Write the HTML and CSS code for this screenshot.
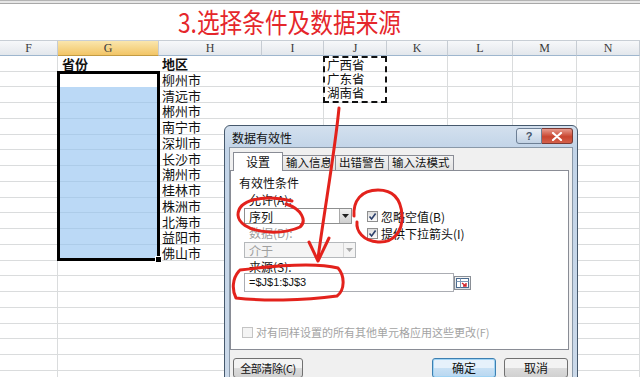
FILE: index.html
```html
<!DOCTYPE html>
<html lang="zh-CN">
<head>
    <meta charset="UTF-8">
    <meta name="viewport" content="width=device-width, initial-scale=1.0">
    <title>选择条件及数据来源</title>
    <link rel="stylesheet" href="styles.css">
</head>
<body>
    <div class="page">
        <div class="topbar"></div>
        <div class="title-band"><h1>3.选择条件及数据来源</h1></div>

        <div class="col-heads">
            <div>F</div>
            <div class="sel">G</div>
            <div>H</div>
            <div>I</div>
            <div>J</div>
            <div>K</div>
            <div>L</div>
            <div>M</div>
            <div>N</div>
        </div>

        <div class="sheet">
            <div class="gridcol"></div>
            <div class="gridcol"></div>
            <div class="gridcol"></div>
            <div class="gridcol"></div>
            <div class="gridcol"></div>
            <div class="gridcol"></div>
            <div class="gridcol"></div>
            <div class="gridcol"></div>
            <div class="gridcol"></div>

            <div class="head-g">省份</div>
            <div class="head-h">地区</div>
            <div class="selection"><span class="fill-handle"></span></div>
            <div class="cities">
                <div>柳州市</div>
                <div>清远市</div>
                <div>郴州市</div>
                <div>南宁市</div>
                <div>深圳市</div>
                <div>长沙市</div>
                <div>潮州市</div>
                <div>桂林市</div>
                <div>株洲市</div>
                <div>北海市</div>
                <div>益阳市</div>
                <div>佛山市</div>
            </div>
            <div class="provinces">
                <div>广西省</div>
                <div>广东省</div>
                <div>湖南省</div>
            </div>
        </div>

        <div class="dialog">
            <div class="dialog-title">
                <span>数据有效性</span>
                <div class="title-btns">
                    <div class="btn-help">?</div>
                    <div class="btn-close">
                        <svg width="12" height="9" viewBox="0 0 12 9"><path d="M2 1 L10 8 M10 1 L2 8" stroke="#fff" stroke-width="2.2" stroke-linecap="round"/></svg>
                    </div>
                </div>
            </div>
            <div class="client">
                <div class="tabs">
                    <div class="tab active">设置</div>
                    <div class="tab">输入信息</div>
                    <div class="tab">出错警告</div>
                    <div class="tab">输入法模式</div>
                </div>
                <div class="panel">
                    <div class="group-label">有效性条件</div>
                    <div class="cond">
                        <div class="cond-left">
                            <div class="field-label">允许(A):</div>
                            <div class="combo">
                                <span>序列</span>
                                <i class="arrow"><svg width="7" height="4" viewBox="0 0 7 4"><path d="M0 0 H7 L3.5 4 Z" fill="#222"/></svg></i>
                            </div>
                            <div class="field-label muted">数据(D):</div>
                            <div class="combo disabled">
                                <span>介于</span>
                                <i class="arrow"><svg width="7" height="4" viewBox="0 0 7 4"><path d="M0 0 H7 L3.5 4 Z" fill="#a8a8a8"/></svg></i>
                            </div>
                        </div>
                        <div class="checks">
                            <label class="check"><span class="box on"><svg width="9" height="9" viewBox="0 0 9 9"><path d="M1.5 4.5 L3.6 7 L7.6 1.5" stroke="#2b3f6b" stroke-width="1.6" fill="none"/></svg></span>忽略空值(B)</label>
                            <label class="check"><span class="box on"><svg width="9" height="9" viewBox="0 0 9 9"><path d="M1.5 4.5 L3.6 7 L7.6 1.5" stroke="#2b3f6b" stroke-width="1.6" fill="none"/></svg></span>提供下拉箭头(I)</label>
                        </div>
                    </div>
                    <div class="field-label source-label">来源(S):</div>
                    <div class="source">
                        <div class="source-input">=$J$1:$J$3</div>
                        <div class="refedit">
                            <svg width="13" height="10" viewBox="0 0 13 10">
                                <rect x="0.5" y="0.5" width="12" height="9" fill="#fff" stroke="#4a6a8e"/>
                                <path d="M0.5 3.5 H12.5 M4.5 0.5 V9.5" stroke="#7d98b6"/>
                                <path d="M6 5 L10 8 M10 5 L10 8 L7 8" stroke="#d2232a" stroke-width="1.4" fill="none"/>
                            </svg>
                        </div>
                    </div>
                    <label class="check apply-all"><span class="box off"></span>对有同样设置的所有其他单元格应用这些更改(F)</label>
                </div>
                <div class="btn-row">
                    <div class="btn clear">全部清除(C)</div>
                    <div class="btn default">确定</div>
                    <div class="btn cancel">取消</div>
                </div>
            </div>
        </div>

        <svg class="marks" width="640" height="377" viewBox="0 0 640 377">
            <g fill="none" stroke="#e3221c" stroke-width="3" stroke-linecap="round" stroke-linejoin="round">
                <path d="M339 108 C335 150, 326 200, 318 258"/>
                <path d="M309 242 L318 261 L329 238"/>
                <path d="M292 201 C262 194, 238 200, 238 215 C239 232, 278 237, 300 227 C307 221, 302 209, 286 204"/>
                <path d="M354 216 C353 201, 361 190, 378 190 C395 190, 401 201, 402 215 C403 232, 393 243, 378 242 C363 241, 356 231, 357 222"/>
                <path d="M240 270 C280 265, 318 263, 338 268 C345 276, 345 290, 337 296 C302 301, 262 301, 236 298 C232 290, 232 279, 239 271"/>
            </g>
        </svg>
    </div>
</body>
</html>
```

FILE: styles.css
```css
body {
    margin: 0;
    font-family: "Noto Sans CJK SC", sans-serif;
    background-color: #fff;
}
.page {
    position: relative;
    width: 640px;
    height: 377px;
    overflow: hidden;
    background-color: #fff;
}
.topbar {
    height: 4px;
    background: linear-gradient(#b4b4b4 0 1px, #e6e6e6 1px 3px, #a8a8a8 3px 4px);
}
.title-band {
    height: 36px;
    padding-left: 178px;
    box-sizing: border-box;
}
.title-band h1 {
    display: inline-block;
    margin: 0;
    font-size: 27px;
    line-height: 36px;
    font-weight: normal;
    color: #e5262b;
    white-space: nowrap;
    transform: scaleX(0.84);
    transform-origin: left center;
}

/* column headers */
.col-heads {
    display: grid;
    grid-template-columns: 58px 101px 103px 62px 63px 61px 65px 64px 63px;
    height: 16px;
}
.col-heads div {
    box-sizing: border-box;
    background: linear-gradient(#f7f8fa, #e3e7ec);
    border-top: 1px solid #c8ced5;
    border-right: 1px solid #c6ccd3;
    border-bottom: 1px solid #9eb6ce;
    font: 12px "Liberation Serif", serif;
    line-height: 14px;
    text-align: center;
    color: #3a3a3a;
}
.col-heads .sel {
    background: linear-gradient(#fae6ad, #f2c566);
    border-bottom-color: #c29b43;
}

/* sheet */
.sheet {
    display: grid;
    grid-template-columns: 58px 101px 103px 62px 63px 61px 65px 64px 63px;
    grid-template-rows: repeat(21, 15.75px);
    background: repeating-linear-gradient(to bottom, #fff 0 14.75px, #dadcdd 14.75px 15.75px);
    font-size: 13px;
    line-height: 15.75px;
    color: #111;
}
.gridcol {
    grid-row: 1 / -1;
    border-right: 1px solid #dadcdd;
}
.head-g {
    grid-column: 2;
    grid-row: 1;
    padding-left: 4px;
    font-weight: bold;
}
.head-h {
    grid-column: 3;
    grid-row: 1;
    padding-left: 3px;
    font-weight: bold;
}
.selection {
    grid-column: 2;
    grid-row: 2 / 14;
    position: relative;
    margin: -1px -1px 0 -1px;
    border: 3px solid #000;
    background: linear-gradient(#fff 0 13px, transparent 13px), rgba(146, 194, 240, 0.62);
}
.fill-handle {
    position: absolute;
    right: -5px;
    bottom: -5px;
    width: 5px;
    height: 5px;
    background-color: #000;
    border: 1px solid #fff;
}
.cities {
    grid-column: 3;
    grid-row: 2 / 14;
    padding-left: 3px;
}
.cities div {
    height: 15.75px;
}
.provinces {
    grid-column: 5;
    grid-row: 1 / 4;
    border: 2px dashed #111;
    margin-left: -1px;
    padding-left: 2px;
    font-size: 12.5px;
    line-height: 14px;
}
.provinces div {
    height: 14px;
}

/* dialog */
.dialog {
    position: absolute;
    left: 224px;
    top: 125px;
    width: 354px;
    height: 262px;
    box-sizing: border-box;
    padding: 0 4px;
    border: 1px solid #46596d;
    border-radius: 6px 6px 0 0;
    background: linear-gradient(#d3e0ee, #c2d4e8 22px, #cbd9e9);
    font-size: 12px;
    color: #111;
}
.dialog-title {
    height: 21px;
    display: flex;
    justify-content: space-between;
    align-items: flex-start;
}
.dialog-title span {
    margin: 5px 0 0 3px;
    line-height: 13px;
}
.title-btns {
    display: flex;
    margin-top: 2px;
}
.btn-help {
    width: 26px;
    height: 16px;
    box-sizing: border-box;
    border: 1px solid #6d7f95;
    border-radius: 3px 0 0 3px;
    background: linear-gradient(#e9eff6, #c2d2e4);
    font: bold 11px "Liberation Sans", sans-serif;
    line-height: 14px;
    text-align: center;
    color: #45566b;
}
.btn-close {
    width: 31px;
    height: 16px;
    box-sizing: border-box;
    border: 1px solid #7a3a34;
    border-left: none;
    border-radius: 0 3px 3px 0;
    background: linear-gradient(#e79b8e, #c9452f 55%, #d3604b);
    display: flex;
    align-items: center;
    justify-content: center;
}
.client {
    height: 239px;
    box-sizing: border-box;
    padding-top: 4px;
    border: 1px solid #8998a8;
    background-color: #f0f0f0;
}
.tabs {
    display: flex;
    align-items: flex-end;
    height: 18px;
    margin-left: 3px;
}
.tab {
    height: 15px;
    box-sizing: border-box;
    padding: 0 3px;
    margin-right: -1px;
    border: 1px solid #898c95;
    border-bottom: none;
    background: linear-gradient(#f3f3f3, #e2e2e2);
    font-size: 11.5px;
    line-height: 13px;
    white-space: nowrap;
}
.tab.active {
    position: relative;
    z-index: 1;
    height: 19px;
    margin-bottom: -1px;
    padding: 0 12px;
    background: #fff;
    font-size: 12px;
    line-height: 17px;
}
.panel {
    height: 180px;
    box-sizing: border-box;
    margin-right: 3px;
    border: 1px solid #898c95;
    background-color: #fff;
    display: flex;
    flex-direction: column;
    padding-bottom: 9px;
}
.group-label {
    margin: 5px 0 0 8px;
    line-height: 14px;
}
.cond {
    display: flex;
    gap: 10px;
    margin: 3px 0 0 13px;
}
.cond-left {
    width: 113px;
}
.field-label {
    padding-left: 5px;
    height: 14px;
    line-height: 14px;
}
.field-label.muted {
    height: 16px;
    line-height: 18px;
    color: #a0a0a0;
}
.combo {
    width: 108px;
    height: 16px;
    box-sizing: border-box;
    margin-top: 1px;
    border: 1px solid #8e8f8f;
    background: #fff;
    display: flex;
    align-items: center;
    justify-content: space-between;
    padding-left: 4px;
}
.combo .arrow {
    width: 12px;
    height: 14px;
    box-sizing: border-box;
    border-left: 1px solid #a9a9a9;
    background: linear-gradient(#f2f2f2, #cfcfcf);
    display: flex;
    align-items: center;
    justify-content: center;
}
.combo.disabled {
    width: 112px;
    margin-top: 2px;
    border-color: #b5b8bb;
    background: #f4f4f4;
    color: #a0a0a0;
}
.combo.disabled .arrow {
    border-left-color: #d6d6d6;
    background: #f4f4f4;
}
.checks {
    display: flex;
    flex-direction: column;
    gap: 1px;
    margin-top: 15px;
}
.check {
    display: flex;
    align-items: center;
    gap: 3px;
    height: 16px;
    white-space: nowrap;
}
.box {
    width: 11px;
    height: 11px;
    box-sizing: border-box;
    border: 1px solid #8f8f8f;
    background: linear-gradient(#dcdcdc, #fbfbfb);
    display: flex;
    align-items: center;
    justify-content: center;
}
.box.off {
    border-color: #c4c4c4;
    background: #f4f4f4;
}
.source-label {
    margin: 2px 0 0 13px;
    height: 13px;
    line-height: 13px;
}
.source {
    display: flex;
    align-items: center;
    margin-left: 13px;
}
.source-input {
    width: 210px;
    height: 19px;
    box-sizing: border-box;
    border: 1px solid #abadb3;
    padding-left: 4px;
    font: 11px "Liberation Sans", sans-serif;
    line-height: 17px;
}
.refedit {
    width: 17px;
    height: 14px;
    box-sizing: border-box;
    border: 1px solid #8a8f96;
    background: linear-gradient(#f5f5f5, #d8dde3);
    display: flex;
    align-items: center;
    justify-content: center;
}
.apply-all {
    margin: auto 0 0 11px;
    font-size: 11px;
    color: #a3a3a3;
}
.btn-row {
    display: flex;
    margin: 8px 4px 0 3px;
}
.btn {
    width: 64px;
    height: 20px;
    box-sizing: border-box;
    border: 1px solid #707070;
    border-radius: 3px;
    background: linear-gradient(#f3f3f3 50%, #dcdcdc 50%, #d0d0d0);
    line-height: 18px;
    text-align: center;
    white-space: nowrap;
}
.btn.clear {
    width: 70px;
    font-size: 11px;
    letter-spacing: -0.4px;
}
.btn.default {
    margin-left: auto;
    border-color: #3c7fb1;
    background: linear-gradient(#e6f1fb 50%, #c9e1f5 50%, #b8d7f0);
    box-shadow: inset 0 0 0 1px #9fd3f4;
}
.btn.cancel {
    margin-left: 8px;
}
.marks {
    position: absolute;
    left: 0;
    top: 0;
    pointer-events: none;
}
```
